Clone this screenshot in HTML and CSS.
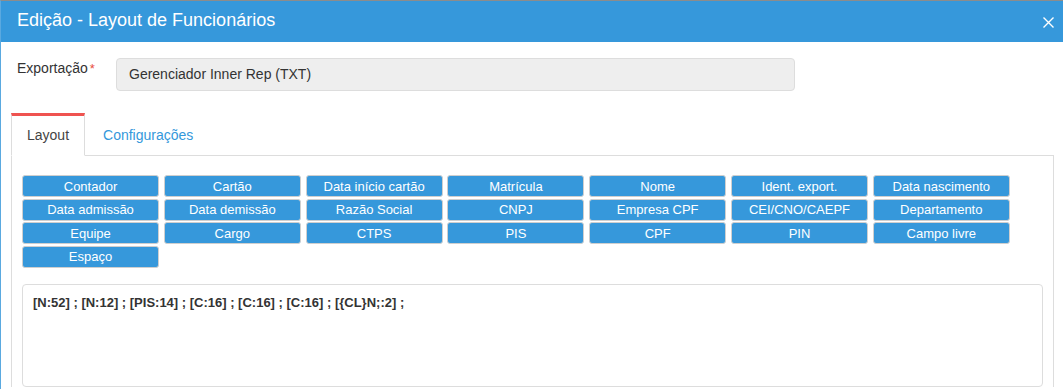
FILE: index.html
```html
<!DOCTYPE html>
<html lang="pt-BR">
<head>
    <meta charset="UTF-8">
    <meta name="viewport" content="width=device-width, initial-scale=1.0">
    <title>Edição - Layout de Funcionários</title>
    <link rel="stylesheet" href="styles.css">
</head>
<body>
    <div class="modal">
        <header class="modal-header">
            <h1>Edição - Layout de Funcionários</h1>
            <button class="close" type="button" aria-label="Fechar">
                <svg width="11" height="11" viewBox="0 0 11 11">
                    <path d="M0.5 0.5 L10.5 10.5 M10.5 0.5 L0.5 10.5" stroke="#fff" stroke-width="1.4" fill="none"/>
                </svg>
            </button>
        </header>

        <div class="modal-body">
            <div class="form-row">
                <label class="form-label">Exportação<span class="required">*</span></label>
                <div class="form-input">Gerenciador Inner Rep (TXT)</div>
            </div>

            <ul class="tabs">
                <li class="tab active">Layout</li>
                <li class="tab">Configurações</li>
            </ul>

            <div class="tab-panel">
                <div class="field-buttons">
                    <button class="field">Contador</button>
                    <button class="field">Cartão</button>
                    <button class="field">Data início cartão</button>
                    <button class="field">Matrícula</button>
                    <button class="field">Nome</button>
                    <button class="field">Ident. export.</button>
                    <button class="field">Data nascimento</button>
                    <button class="field">Data admissão</button>
                    <button class="field">Data demissão</button>
                    <button class="field">Razão Social</button>
                    <button class="field">CNPJ</button>
                    <button class="field">Empresa CPF</button>
                    <button class="field">CEI/CNO/CAEPF</button>
                    <button class="field">Departamento</button>
                    <button class="field">Equipe</button>
                    <button class="field">Cargo</button>
                    <button class="field">CTPS</button>
                    <button class="field">PIS</button>
                    <button class="field">CPF</button>
                    <button class="field">PIN</button>
                    <button class="field">Campo livre</button>
                    <button class="field">Espaço</button>
                </div>

                <div class="layout-text">[N:52] ; [N:12] ; [PIS:14] ; [C:16] ; [C:16] ; [C:16] ; [{CL}N;:2] ;</div>
            </div>
        </div>
    </div>
</body>
</html>
```

FILE: styles.css
```css
* {
    margin: 0;
    padding: 0;
    box-sizing: border-box;
    font-family: 'Liberation Sans', Arial, sans-serif;
}

body {
    background-color: #fff;
    color: #333;
    font-size: 14px;
    overflow: hidden;
}

.modal {
    border-top: 1px solid #8c8c8c;
    border-left: 1px solid #5aa9e0;
    min-height: 389px;
}

.modal-header {
    height: 41px;
    background-color: #3698db;
    display: flex;
    align-items: center;
    justify-content: space-between;
    padding: 0 9px 2px 16px;
}

.modal-header h1 {
    color: #fff;
    font-size: 18px;
    font-weight: normal;
}

.close {
    background: none;
    border: none;
    width: 11px;
    height: 11px;
    display: flex;
    margin-top: 4px;
    cursor: pointer;
}

.modal-body {
    padding: 16px 9px 0 10px;
}

.form-row {
    display: flex;
    align-items: flex-start;
}

.form-label {
    width: 105px;
    padding-left: 6px;
    line-height: 20px;
    color: #333;
}

.required {
    color: #e84c3d;
    font-size: 13px;
    margin-left: 2px;
}

.form-input {
    width: 679px;
    height: 33px;
    line-height: 31px;
    padding-left: 12px;
    background-color: #eee;
    border: 1px solid #ddd;
    border-radius: 4px;
    color: #333;
}

.tabs {
    list-style: none;
    display: flex;
    margin-top: 22px;
    border-bottom: 1px solid #ddd;
}

.tab {
    padding: 9px 15px 10px;
    line-height: 20px;
    margin-right: 2px;
    margin-bottom: -1px;
    border: 1px solid transparent;
    border-top-width: 3px;
    color: #3498db;
    cursor: pointer;
}

.tab.active {
    color: #444;
    background-color: #fff;
    border-color: #ddd;
    border-top-color: #ef5350;
    border-bottom-color: #fff;
}

.tab-panel {
    border-left: 1px solid #ddd;
    border-right: 1px solid #ddd;
    padding: 19px 10px 0 10px;
}

.field-buttons {
    display: grid;
    grid-template-columns: repeat(7, 137px);
    column-gap: 4.8px;
    row-gap: 1.5px;
}

.field {
    height: 22px;
    background-color: #3698db;
    border: 1px solid #cfcfcf;
    border-radius: 3px;
    color: #fff;
    font-size: 13px;
    text-align: center;
    cursor: pointer;
}

.layout-text {
    margin-top: 16.5px;
    height: 103px;
    border: 1px solid #ddd;
    border-radius: 4px;
    padding: 9px 10px;
    font-size: 13px;
    font-weight: bold;
    line-height: 18.5px;
    color: #333;
}
```
